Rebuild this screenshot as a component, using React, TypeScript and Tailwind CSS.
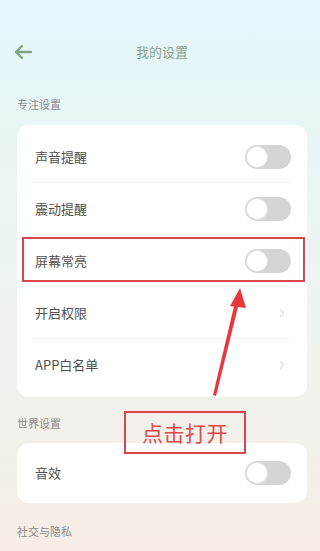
import { ChevronRight } from 'lucide-react'

const Toggle = () => (
  <div className="w-[46px] h-6 rounded-full bg-[#d5d5d5] p-[2px] flex items-center">
    <div className="w-5 h-5 rounded-full bg-white shadow-[0_0_0_1px_#e2e2e2]" />
  </div>
)

const Row = ({
  label,
  right,
  divider = true,
  children,
}: {
  label: string
  right: 'toggle' | 'chevron'
  divider?: boolean
  children?: React.ReactNode
}) => (
  <div className="relative h-[52px] px-4">
    <div
      className={`h-full flex items-center justify-between ${
        divider ? 'border-b border-[#f1f1f1]' : ''
      }`}
    >
      <span className="text-[13px] text-[#505050] pl-0.5">{label}</span>
      {right === 'toggle' ? (
        <Toggle />
      ) : (
        <ChevronRight size={14} strokeWidth={1.6} className="text-[#c4c4c4] mr-0.5" />
      )}
    </div>
    {children}
  </div>
)

const Section = ({ title }: { title: string }) => (
  <div className="px-[17px] text-[11px] leading-4 text-[#8a8a8a]">{title}</div>
)

export default function App() {
  return (
    <div
      className="relative w-[320px] h-[551px] overflow-hidden bg-gradient-to-b from-[#e4f7fa] via-[#edf4f1] to-[#f6eee6]"
      style={{ fontFamily: '"Noto Sans CJK SC", "Noto Sans", sans-serif' }}
    >
      <header className="relative h-7 mt-[38px] flex items-center justify-center">
        <svg
          className="absolute left-[13px]"
          width="20"
          height="16"
          viewBox="0 0 20 16"
          fill="none"
          stroke="#80a582"
          strokeWidth="2.4"
          strokeLinecap="round"
          strokeLinejoin="round"
        >
          <path d="M18 8H3M9 2L3 8l6 6" />
        </svg>
        <span className="text-[13px] text-[#8ca08e] pl-1">我的设置</span>
      </header>

      <div className="mt-[30px]">
        <Section title="专注设置" />
      </div>
      <div className="mt-[13px] ml-[17px] mr-[13px] rounded-xl bg-white py-1.5">
        <Row label="声音提醒" right="toggle" />
        <Row label="震动提醒" right="toggle" />
        <Row label="屏幕常亮" right="toggle">
          <div className="absolute left-[5px] right-[2px] top-[2px] bottom-[5px] border-2 border-[#d9474c]" />
        </Row>
        <Row label="开启权限" right="chevron" />
        <Row label="APP白名单" right="chevron" divider={false} />
      </div>

      <div className="mt-[18px]">
        <Section title="世界设置" />
      </div>
      <div className="mt-3 ml-[17px] mr-[13px] rounded-xl bg-white py-1.5">
        <div className="h-12 px-4 flex items-center justify-between">
          <span className="text-[13px] text-[#505050] pl-0.5">音效</span>
          <Toggle />
        </div>
      </div>

      <div className="mt-5">
        <Section title="社交与隐私" />
      </div>

      {/* annotation */}
      <svg className="absolute left-0 top-0 pointer-events-none" width="320" height="551">
        <path d="M213 395 L235 302 L239 303 L216 396 Z" fill="#e8383d" />
        <path d="M240 288 L230 306 L246 308 Z" fill="#e8383d" />
      </svg>
      <div className="absolute left-[124px] top-[411px] w-[122px] h-[43px] border-2 border-[#d9474c] flex items-center justify-center">
        <span className="text-[21px] leading-none text-[#df4a4a] tracking-[0.5px]">点击打开</span>
      </div>
    </div>
  )
}
